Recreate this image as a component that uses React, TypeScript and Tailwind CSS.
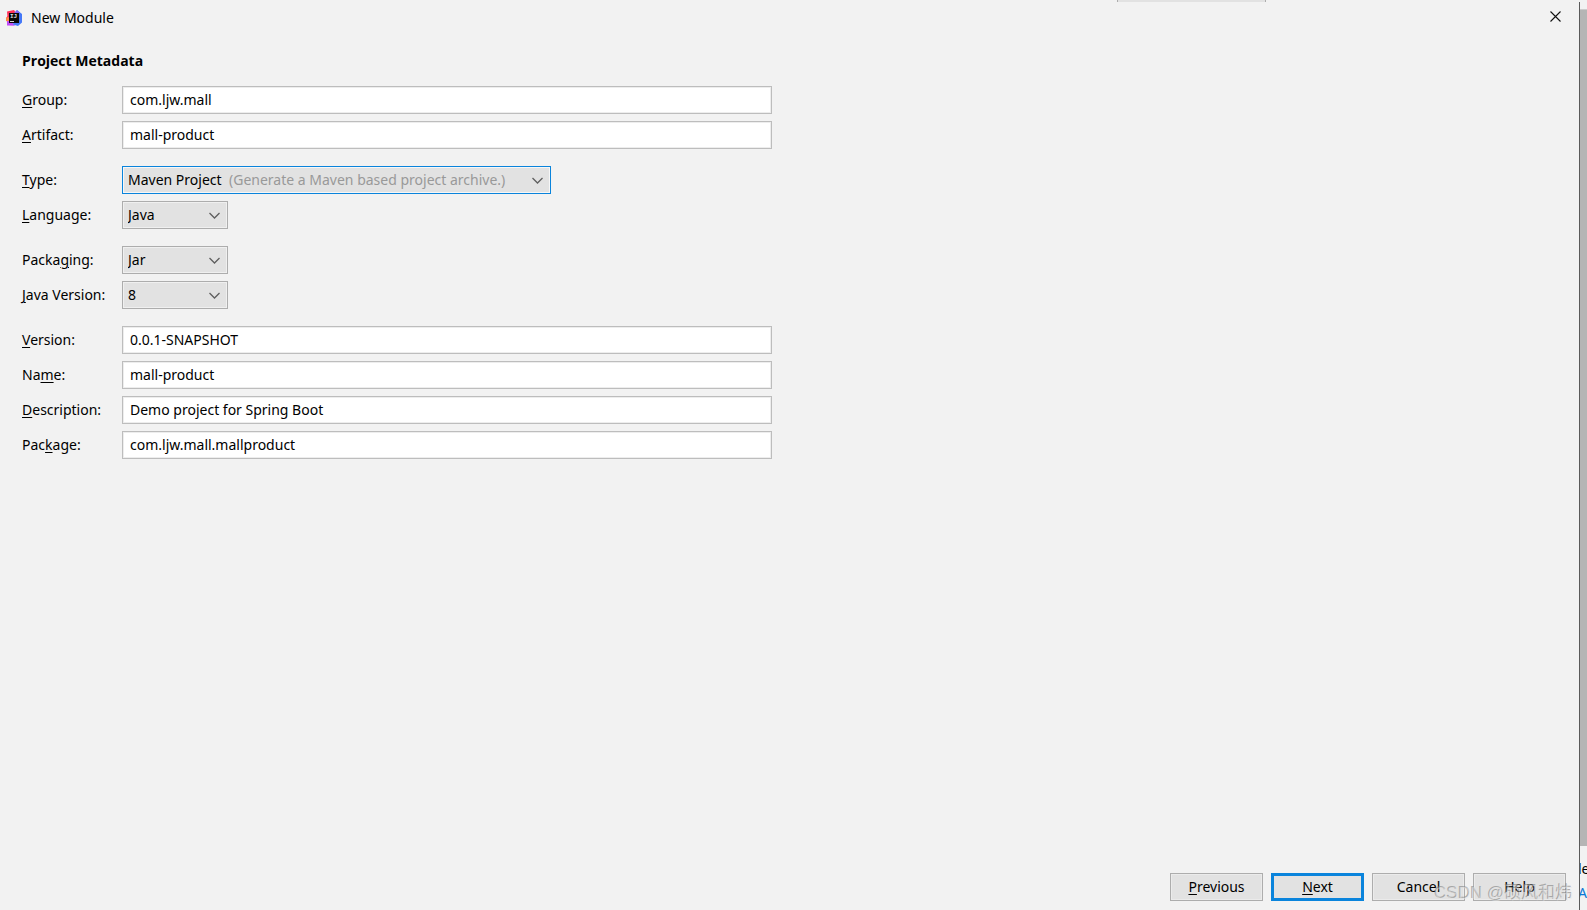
import React, { useState } from "react";

const IdeaLogo = () => (
  <svg width="16" height="16" viewBox="0 0 16 16" aria-hidden="true">
    <path d="M1 1.4 L8 0 L10 3 L6 13 L1 12 L0 8.6 L1.4 6 Z" fill="#ff3158" />
    <path d="M0 7.6 L4 7 L4 11 L0 11 Z" fill="#ff8a4a" />
    <path d="M1 11 L5 11 L9 15.8 L1 15.4 Z" fill="#c04af7" />
    <path d="M9 3 L11 0 L16 4 L16 12.6 L12 16 L7 14.6 Z" fill="#4478f8" />
    <path d="M8 3 L11 0 L14 3 Z" fill="#7f63f5" />
    <rect x="3" y="3" width="10" height="10" fill="#0a0808" />
    <rect x="4" y="11" width="4" height="1" fill="#d8d8d8" />
    <text x="4" y="8" fontSize="6" fontWeight="700" fill="#ddd" fontFamily="Liberation Mono, monospace">
      IJ
    </text>
  </svg>
);

// Underlines the access key of a caption
const Mnemonic = ({ text, at }: { text: string; at: number }) => (
  <span className="whitespace-pre">
    {text.slice(0, at)}
    <span className="underline decoration-1 underline-offset-2">{text[at]}</span>
    {text.slice(at + 1)}
  </span>
);

type RowProps = { id: string; label: string; at: number; children: React.ReactNode };

const Row = ({ id, label, at, children }: RowProps) => (
  <div className="flex h-7 items-center">
    <label htmlFor={id} className="w-[100px] shrink-0">
      <Mnemonic text={label} at={at} />
    </label>
    {children}
  </div>
);

type TextRowProps = {
  id: string;
  label: string;
  at?: number;
  value: string;
  onChange: (id: string, value: string) => void;
};

const TextRow = ({ id, label, at = 0, value, onChange }: TextRowProps) => (
  <Row id={id} label={label} at={at}>
    <input
      id={id}
      type="text"
      value={value}
      onChange={(e) => onChange(id, e.target.value)}
      className="h-7 w-full max-w-[650px] border border-[#bdbdbd] bg-white px-[7px] pb-0.5 inset-ring inset-ring-[#ededed] outline-none focus:border-[#0a84dc]"
    />
  </Row>
);

type SelectRowProps = {
  id: string;
  label: string;
  at?: number;
  options: string[];
  hint?: string;
  active?: boolean;
};

const SelectRow = ({ id, label, at = 0, options, hint, active }: SelectRowProps) => (
  <Row id={id} label={label} at={at}>
    <div className={active ? "grid w-[429px] items-center" : "grid w-[106px] items-center"}>
      <select
        id={id}
        className={
          active
            ? "col-start-1 row-start-1 h-7 appearance-none border border-[#0a84dc] bg-[#e2e2e2] px-[5px] inset-ring inset-ring-[#f7f7f7] outline-none"
            : "col-start-1 row-start-1 h-7 appearance-none border border-[#adadad] bg-[#e2e2e2] px-[5px] inset-ring inset-ring-[#f0f0f0] outline-none"
        }
      >
        {options.map((option) => (
          <option key={option}>{option}</option>
        ))}
      </select>
      {hint && (
        <span className="pointer-events-none col-start-1 row-start-1 pl-[107px] text-[#999999]">{hint}</span>
      )}
      <svg
        width="12"
        height="7"
        viewBox="0 0 12 7"
        className="pointer-events-none col-start-1 row-start-1 mr-[7px] justify-self-end"
        aria-hidden="true"
      >
        <path d="M0.5 1 L5.5 6 L10.5 1" fill="none" stroke="#5f5f5f" strokeWidth="1.3" />
      </svg>
    </div>
  </Row>
);

const plainButton =
  "h-7 w-[93px] border border-[#adadad] bg-[#e2e2e2] inset-ring inset-ring-[#ebebeb]";

const App = () => {
  const [values, setValues] = useState<Record<string, string>>({
    group: "com.ljw.mall",
    artifact: "mall-product",
    version: "0.0.1-SNAPSHOT",
    name: "mall-product",
    description: "Demo project for Spring Boot",
    package: "com.ljw.mall.mallproduct",
  });

  const handleChange = (id: string, value: string) => {
    setValues({ ...values, [id]: value });
  };

  return (
    <div className="relative flex min-h-screen overflow-hidden bg-[#f2f2f2] font-['Noto_Sans','Noto_Sans_CJK_SC',sans-serif] text-[14px] leading-5 text-black">
      <div className="flex min-w-0 flex-1 flex-col">
        <div className="flex h-0.5 justify-end">
          <div className="mr-[313px] w-[149px] border-x border-[#adadad] bg-[#e2e2e2]" />
        </div>

        <header className="flex h-8 items-center justify-between pl-1.5">
          <div className="flex items-center gap-[9px]">
            <IdeaLogo />
            <h1>New Module</h1>
          </div>
          <button type="button" aria-label="Close" className="mr-[18px] pb-1">
            <svg width="11" height="11" viewBox="0 0 11 11" aria-hidden="true">
              <path d="M0.5 0.5 L10.5 10.5 M10.5 0.5 L0.5 10.5" stroke="#111" strokeWidth="1.1" />
            </svg>
          </button>
        </header>

        <main className="flex-1 px-[22px] pt-[17px]">
          <h2 className="mb-[15px] font-['Open_Sans',sans-serif] font-bold">Project Metadata</h2>
          <form className="flex flex-col gap-[17px]">
            <div className="flex flex-col gap-[7px]">
              <TextRow id="group" label="Group:" value={values.group} onChange={handleChange} />
              <TextRow id="artifact" label="Artifact:" value={values.artifact} onChange={handleChange} />
            </div>
            <div className="flex flex-col gap-[7px]">
              <SelectRow
                id="type"
                label="Type:"
                options={["Maven Project", "Gradle Project"]}
                hint="(Generate a Maven based project archive.)"
                active
              />
              <SelectRow id="language" label="Language:" options={["Java", "Kotlin", "Groovy"]} />
            </div>
            <div className="flex flex-col gap-[7px]">
              <SelectRow id="packaging" label="Packaging:" at={5} options={["Jar", "War"]} />
              <SelectRow id="java" label="Java Version:" options={["8", "11", "17"]} />
            </div>
            <div className="flex flex-col gap-[7px]">
              <TextRow id="version" label="Version:" value={values.version} onChange={handleChange} />
              <TextRow id="name" label="Name:" at={2} value={values.name} onChange={handleChange} />
              <TextRow id="description" label="Description:" value={values.description} onChange={handleChange} />
              <TextRow id="package" label="Package:" at={3} value={values.package} onChange={handleChange} />
            </div>
          </form>
        </main>

        <footer className="flex justify-end gap-2 pr-[13px] pb-[9px]">
          <button type="button" className={plainButton}>
            <Mnemonic text="Previous" at={0} />
          </button>
          <button type="button" className="h-7 w-[93px] border-3 border-[#0a84dc] bg-[#e2e2e2]">
            <Mnemonic text="Next" at={0} />
          </button>
          <button type="button" className={plainButton}>
            Cancel
          </button>
          <button type="button" className={plainButton}>
            Help
          </button>
        </footer>
      </div>

      {/* sliver of the window behind the dialog */}
      <aside className="mt-0.5 flex w-2 flex-col overflow-hidden border-l border-[#5a5a5a] pt-[7px]">
        <div className="flex-1 border-t border-[#cccccc] bg-[#b5b5b5]" />
        <div className="flex h-16 flex-col gap-1 pt-[13px]">
          <span className="-ml-0.5">le</span>
          <a href="#" className="-ml-0.5 text-[#0a78d6]">
            Ag
          </a>
        </div>
      </aside>

      <div className="pointer-events-none absolute right-3.5 bottom-1 font-['Liberation_Sans','Noto_Sans_CJK_SC',sans-serif] text-[17px] leading-6 text-[#e6e6e6]/50 [text-shadow:-1px_-1px_0_#80808099]">
        CSDN @硕风和炜
      </div>
    </div>
  );
};

export default App;
